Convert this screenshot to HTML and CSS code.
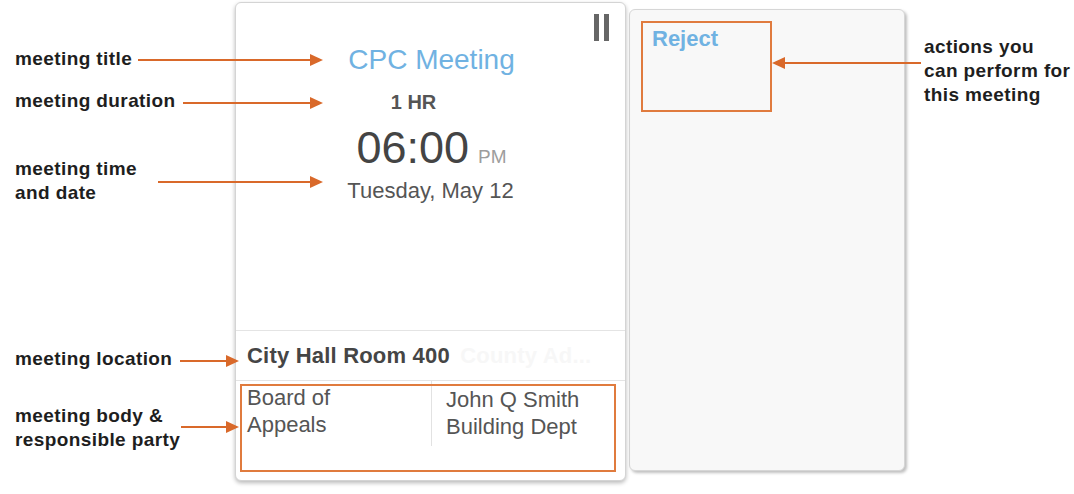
FILE: index.html
```html
<!DOCTYPE html>
<html>
<head>
<meta charset="utf-8">
<link rel="stylesheet" href="styles.css">
</head>
<body>
<div class="stage">
  <div class="cards">
    <div class="card-front">
      <div class="pause"><span></span><span></span></div>
      <div class="head">
        <div class="title">CPC Meeting</div>
        <div class="dur">1 HR</div>
        <div class="time"><span class="clock">06:00</span><span class="ampm">PM</span></div>
        <div class="date">Tuesday, May 12</div>
      </div>
      <div class="loc">City Hall Room 400 <span class="ghost">County Ad...</span></div>
      <div class="parties">
        <div class="col col-body">Board of<br>Appeals</div>
        <div class="col col-party">John Q Smith<br>Building Dept</div>
      </div>
    </div>
    <div class="card-back">
      <div class="action">Reject</div>
    </div>
  </div>

  <div class="note n-title">meeting title</div>
  <div class="note n-dur">meeting duration</div>
  <div class="note n-time">meeting time<br>and date</div>
  <div class="note n-loc">meeting location</div>
  <div class="note n-body">meeting body &amp;<br>responsible party</div>
  <div class="note n-act">actions you<br>can perform for<br>this meeting</div>

  <div class="hl hl-parties"></div>
  <div class="hl hl-actions"></div>

  <svg class="arrows" width="1074" height="494" viewBox="0 0 1074 494">
    <g stroke="#d9692a" stroke-width="2" fill="none">
      <line x1="138" y1="60" x2="312" y2="60"/>
      <line x1="183" y1="103" x2="312" y2="103"/>
      <line x1="158" y1="182" x2="312" y2="182"/>
      <line x1="180" y1="361" x2="228" y2="361"/>
      <line x1="181" y1="427" x2="228" y2="427"/>
      <line x1="921" y1="63" x2="782" y2="63"/>
    </g>
    <g fill="#d9692a">
      <polygon points="310,54 323,60 310,66"/>
      <polygon points="310,97 323,103 310,109"/>
      <polygon points="310,176 323,182 310,188"/>
      <polygon points="226,355 239,361 226,367"/>
      <polygon points="226,421 239,427 226,433"/>
      <polygon points="785,57 772,63 785,69"/>
    </g>
  </svg>
</div>
</body>
</html>
```

FILE: styles.css
```css
* { box-sizing: border-box; }
html, body { margin: 0; padding: 0; background: #fff; }
body { font-family: "Liberation Sans", Arial, sans-serif; }

.stage {
  position: relative;
  width: 1074px;
  height: 494px;
  overflow: hidden;
}

.cards {
  display: flex;
  align-items: flex-start;
  gap: 3px;
  padding: 2px 0 0 235px;
}

.card-front {
  position: relative;
  width: 391px;
  height: 479px;
  border: 1px solid #d4d4d4;
  border-radius: 6px;
  background: #fff;
  box-shadow: 0 2px 4px rgba(0,0,0,0.28);
  display: flex;
  flex-direction: column;
}

.pause {
  position: absolute;
  top: 11px;
  right: 16px;
  display: flex;
  gap: 5px;
}
.pause span {
  display: block;
  width: 5px;
  height: 27px;
  background: #666;
}

.head {
  height: 328px;
  border-bottom: 1px solid #e4e4e4;
  display: flex;
  flex-direction: column;
  align-items: center;
  padding-top: 41px;
}
.title {
  font-size: 28px;
  line-height: 32px;
  color: #70b2e2;
  padding-left: 2px;
}
.dur {
  margin-top: 15px;
  font-size: 20px;
  line-height: 23px;
  font-weight: bold;
  color: #555;
  margin-right: 34px;
}
.time {
  margin-top: 11px;
  display: flex;
  align-items: baseline;
  gap: 9px;
  height: 46px;
  padding-left: 2px;
}
.clock {
  font-size: 45px;
  line-height: 46px;
  color: #444;
}
.ampm {
  font-size: 19px;
  line-height: 20px;
  color: #9d9d9d;
}
.date {
  margin-top: 7px;
  font-size: 22px;
  line-height: 26px;
  color: #555;
  padding-left: 0;
}

.loc {
  height: 50px;
  border-bottom: 1px solid #e4e4e4;
  padding-left: 11px;
  font-size: 22px;
  line-height: 49px;
  font-weight: bold;
  color: #454545;
  white-space: nowrap;
  overflow: hidden;
  letter-spacing: 0.2px;
}
.ghost {
  color: #f7f7f7;
  margin-left: 4px;
}

.parties {
  display: flex;
  align-items: flex-start;
}
.col {
  font-size: 22px;
  line-height: 27px;
  color: #555;
}
.col-body {
  width: 196px;
  height: 65px;
  border-right: 1px solid #e2e2e2;
  padding: 3px 0 0 11px;
}
.col-party {
  padding: 5px 0 0 14px;
}

.card-back {
  margin-top: 7px;
  width: 276px;
  height: 462px;
  border: 1px solid #d6d6d6;
  border-radius: 6px;
  background: #f8f8f8;
  box-shadow: 2px 2px 3px rgba(0,0,0,0.25);
  padding: 16px 0 0 22px;
}
.action {
  font-size: 22px;
  line-height: 26px;
  font-weight: bold;
  color: #70b2e2;
}

.note {
  position: absolute;
  font-size: 19px;
  line-height: 24px;
  font-weight: bold;
  color: #1e1e1e;
  letter-spacing: 0.4px;
  white-space: nowrap;
}
.n-title { left: 15px; top: 47px; }
.n-dur { left: 15px; top: 89px; }
.n-time { left: 15px; top: 157px; }
.n-loc { left: 15px; top: 347px; }
.n-body { left: 15px; top: 404px; }
.n-act { left: 924px; top: 35px; }

.hl {
  position: absolute;
  border: 2px solid #e07b3e;
}
.hl-parties { left: 240px; top: 384px; width: 376px; height: 88px; }
.hl-actions { left: 641px; top: 21px; width: 131px; height: 91px; }

.arrows {
  position: absolute;
  left: 0;
  top: 0;
  pointer-events: none;
}
```
